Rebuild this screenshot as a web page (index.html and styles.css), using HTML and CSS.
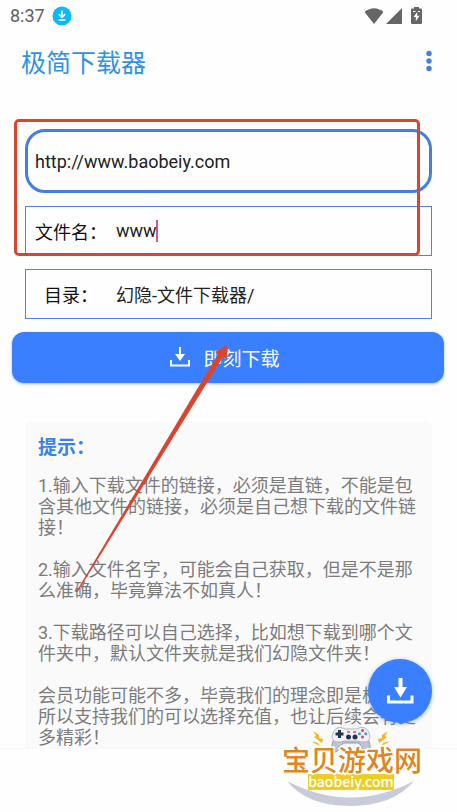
FILE: index.html
```
<!DOCTYPE html>
<html lang="zh-CN">
<head>
  <meta charset="UTF-8">
  <meta name="viewport" content="width=device-width, initial-scale=1.0">
  <title>极简下载器</title>
  <link rel="stylesheet" href="styles.css">
</head>
<body>
  <div class="status-bar">
    <span class="clock">8:37</span>
    <svg class="status-download" width="20" height="20" viewBox="0 0 20 20">
      <circle cx="10" cy="10" r="9.5" fill="#0cb8fa"/>
      <path d="M10 4.500v6.500M6.800 8L10 11.300l3.200-3.300M6.500 14h7" fill="none" stroke="#fff" stroke-width="1.600"/>
    </svg>
    <div class="status-icons">
      <svg width="20" height="16" viewBox="0 0 20 16"><path d="M0.500 4Q10-3.500 19.500 4L10 16z"/></svg>
      <svg width="16" height="16" viewBox="0 0 16 16"><path d="M16 0v16H0z"/></svg>
      <svg class="battery" width="11" height="17" viewBox="0 0 11 17">
        <path d="M3 0h5v1.500h2q1 0 1 1V16q0 1-1 1H1q-1 0-1-1V2.500q0-1 1-1h2z"/>
        <path d="M6.200 5L2.500 10h2.300v4.200l3.700-5.400H6.200zM2 4h2.500v1H2zM7 4h2v1H7z" fill="#fff"/>
      </svg>
    </div>
  </div>

  <header class="app-bar">
    <h1>极简下载器</h1>
    <button type="button" class="menu-button" aria-label="更多">
      <svg width="6" height="22" viewBox="0 0 6 22">
        <circle cx="3" cy="3.500" r="2.700"/>
        <circle cx="3" cy="11" r="2.700"/>
        <circle cx="3" cy="18.500" r="2.700"/>
      </svg>
    </button>
  </header>

  <main class="content">
    <form id="download-form">
      <div class="fields">
        <input type="text" class="url-input" aria-label="下载链接" value="http://www.baobeiy.com">
        <div class="field-row">
          <label for="filename">文件名：</label>
          <input type="text" id="filename" value="www">
          <span class="caret"></span>
        </div>
        <div class="field-row">
          <label for="folder">目录：</label>
          <input type="text" id="folder" value="幻隐-文件下载器/">
        </div>
        <div class="mark-box"></div>
      </div>
      <button type="button" class="download-button">
        <svg width="20" height="20" viewBox="0 0 20 20">
          <path d="M9 0h2v7h4l-5 7-5-7h4zM0 13h2v4.500h16V13h2v6.500H0z"/>
        </svg>
        即刻下载
      </button>
    </form>

    <section class="tips">
      <h2>提示：</h2>
      <p>1.输入下载文件的链接，必须是直链，不能是包含其他文件的链接，必须是自己想下载的文件链接！</p>
      <p>2.输入文件名字，可能会自己获取，但是不是那么准确，毕竟算法不如真人！</p>
      <p>3.下载路径可以自己选择，比如想下载到哪个文件夹中，默认文件夹就是我们幻隐文件夹！</p>
      <p>会员功能可能不多，毕竟我们的理念即是极简，所以支持我们的可以选择充值，也让后续会有更多精彩！</p>
    </section>

    <svg class="mark-arrow" width="153" height="249" viewBox="0 0 153 249">
      <path d="M0 248L142 10l-3-2L151 1v14l-4-2L1.500 248z"/>
    </svg>
  </main>

  <footer class="bottom-bar"></footer>

  <button type="button" class="fab" aria-label="下载">
    <svg width="27" height="27" viewBox="0 0 27 27">
      <path d="M11.500 0h4v9H20l-6.500 10.500L7 9h4.500zM0 17.500h3v5h20.500v-5h3V25.500H0z"/>
    </svg>
  </button>

  <div class="watermark">
    <svg width="144" height="84" viewBox="0 0 144 84">
      <path d="M6 57Q69 90 133 57Q112 82 69 82Q26 82 6 57z" fill="#c9ccd8"/>
      <circle cx="70" cy="17" r="17" fill="#f4f4f6"/>
      <!-- game pad -->
      <path d="M54 12q-4 9-3 15 4 3 7-2l4-6h16l4 6q3 5 7 2 1-6-3-15z" fill="#bfc2d0" stroke="#9699ab"/>
      <path d="M56 4q4-2 8 1h12q4-3 8-1 4 2 5 8 0 6-6 6-4 0-6-1H63q-2 1-6 1-6 0-6-6 1-6 5-8z" fill="#f1f1f8" stroke="#b4b7c6"/>
      <path d="M58.500 6v8M54.500 10h8" stroke="#24364c" stroke-width="3"/>
      <g fill="#24364c"><circle cx="67.500" cy="13" r="2.500"/><circle cx="74" cy="13" r="2.500"/></g>
      <g fill="#d5485c"><circle cx="81.500" cy="6.500" r="1.500"/><circle cx="81.500" cy="13" r="1.500"/></g>
      <g fill="#3b9fc0"><circle cx="78.500" cy="9.800" r="1.500"/><circle cx="84.800" cy="9.800" r="1.500"/></g>
      <path d="M66 8h3M72 8h3" stroke="#d5485c" stroke-width="1.500"/>
      <g fill="#f5b52a">
        <path d="M32 7l6 4v3l4 1-1 4-8-6 2-1zM107 7l-6 4v3l-4 1 1 4 8-6-2-1zM31 18q5-1 8 4-4-2-8-4zM108 18q-5-1-8 4 4-2 8-4z"/>
      </g>
      <rect x="27" y="50" width="86" height="16" fill="#eecd23"/>
      <text class="brand" x="1" y="47">宝贝游戏网</text>
      <text class="site" x="70" y="63" text-anchor="middle">baobeiy.com</text>
    </svg>
  </div>
</body>
</html>
```
FILE: styles.css
```
* {
  box-sizing: border-box;
}

body {
  margin: 0;
  height: 100vh;
  display: flex;
  flex-direction: column;
  overflow: hidden;
  position: relative;
  background-color: #fefefe;
  font-family: Roboto, "Noto Sans CJK SC", sans-serif;
  font-size: 18px;
}

svg {
  display: block;
}

button, input {
  font: inherit;
}

button {
  border: none;
  padding: 0;
  cursor: pointer;
}

.status-bar {
  display: flex;
  align-items: center;
  height: 31px;
  padding: 0 35px 0 10px;
  color: #606060;
}

.status-download {
  margin-left: 7px;
}

.status-icons {
  display: flex;
  align-items: center;
  gap: 2px;
  margin-left: auto;
  fill: #666;
}

.battery {
  margin-left: 7px;
}

.app-bar {
  display: flex;
  align-items: center;
  justify-content: space-between;
  height: 60px;
  padding: 0 25px 0 21px;
}

h1 {
  margin: 0;
  font-size: 25px;
  font-weight: 400;
  color: #2f93e4;
}

.menu-button {
  background: none;
  fill: #427ee3;
}

.content {
  flex: 1;
  min-height: 0;
  overflow: hidden;
  position: relative;
  padding-top: 38px;
}

.fields {
  position: relative;
  display: flex;
  flex-direction: column;
  gap: 13px;
  margin: 0 25px;
}

.url-input {
  width: 100%;
  height: 64px;
  padding: 0 7px;
  border: 3px solid #427ee3;
  border-radius: 20px;
  outline: none;
  background: none;
  color: #222;
}

.field-row {
  display: flex;
  align-items: center;
  position: relative;
  height: 50px;
  border: 1px solid #4c84ea;
}

.field-row label {
  width: 90px;
  padding-bottom: 1px;
  text-align: center;
  color: #111;
}

.field-row input {
  flex: 1;
  min-width: 0;
  height: 44px;
  padding: 0 0 1px;
  border: none;
  outline: none;
  background: none;
  color: #222;
}

.caret {
  position: absolute;
  left: 130px;
  top: 13px;
  width: 2px;
  height: 22px;
  background-color: #dc5286;
}

.mark-box {
  position: absolute;
  left: -11px;
  right: 12px;
  top: -10px;
  height: 137px;
  border: 3px solid #d84631;
  border-radius: 5px;
  pointer-events: none;
}

.download-button {
  display: flex;
  align-items: center;
  justify-content: center;
  gap: 13px;
  width: calc(100% - 25px);
  height: 51px;
  margin: 13px 13px 0 12px;
  padding: 0 6px 1px 0;
  border-radius: 12px;
  background-color: #397fff;
  box-shadow: 0 1px 3px rgba(57, 127, 255, 0.5);
  color: #fff;
  fill: #fff;
  font-size: 19px;
}

.tips {
  margin: 38px 25px 0;
  padding: 14px 12px 14px 13px;
  border-radius: 6px;
  background-color: #fafafa;
}

.tips h2 {
  margin: 0 0 14px;
  font-size: 19px;
  line-height: 26px;
  color: #397fef;
}

.tips p {
  margin: 0 0 21px;
  line-height: 21px;
  color: #7c7c7c;
}

.mark-arrow {
  position: absolute;
  left: 76px;
  top: 253px;
  fill: #d84631;
  pointer-events: none;
}

.bottom-bar {
  height: 64px;
  border-top: 1px solid #f7f7f7;
  background-color: #fefefe;
}

.fab {
  position: absolute;
  right: 25px;
  bottom: 89px;
  display: flex;
  align-items: center;
  justify-content: center;
  width: 64px;
  height: 64px;
  border-radius: 50%;
  background-color: #397fff;
  box-shadow: 0 1px 4px rgba(57, 127, 255, 0.5);
  fill: #fff;
}

.watermark {
  position: absolute;
  right: 32px;
  bottom: 4px;
}

.brand {
  font-size: 28px;
  font-weight: 500;
  fill: #df861d;
  stroke: #fff;
  stroke-width: 3px;
  paint-order: stroke;
}

.site {
  font-family: "Noto Sans CJK SC", sans-serif;
  font-size: 14px;
  font-weight: 500;
  fill: #fff;
}
```
